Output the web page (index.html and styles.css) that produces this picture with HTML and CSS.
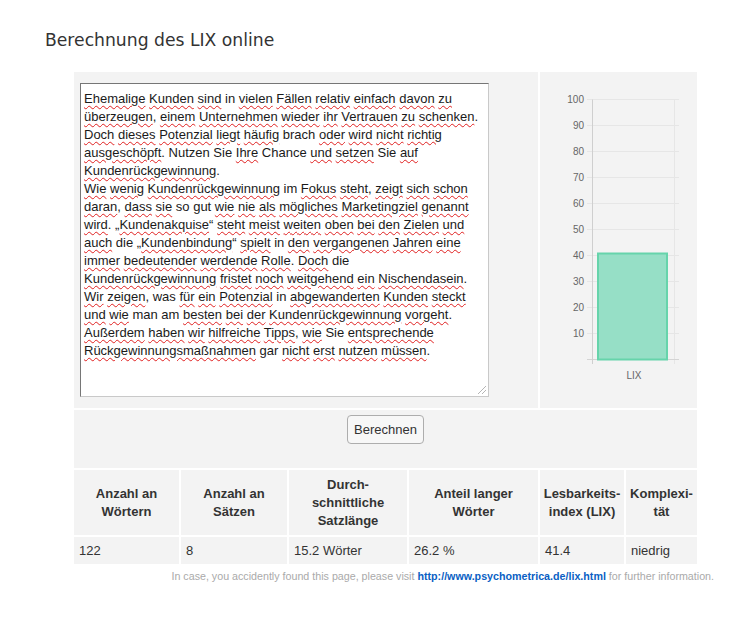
FILE: index.html
```html
<!DOCTYPE html>
<html lang="de">
<head>
    <meta charset="UTF-8">
    <meta name="viewport" content="width=device-width, initial-scale=1.0">
    <title>Berechnung des LIX online</title>
    <link rel="stylesheet" href="styles.css">
</head>
<body>

    <h2 class="title">Berechnung des LIX online</h2>

    <div class="lix">
        <div class="cell input-cell">
            <div class="textbox" id="text">Ehemalige Kunden sind in vielen Fällen relativ einfach davon zu<br>überzeugen, einem Unternehmen wieder ihr Vertrauen zu schenken.<br>Doch dieses Potenzial liegt häufig brach oder wird nicht richtig<br>ausgeschöpft. Nutzen Sie Ihre Chance und setzen Sie auf<br>Kundenrückgewinnung.<br>Wie wenig Kundenrückgewinnung im Fokus steht, zeigt sich schon<br>daran, dass sie so gut wie nie als mögliches Marketingziel genannt<br>wird. „Kundenakquise“ steht meist weiten oben bei den Zielen und<br>auch die „Kundenbindung“ spielt in den vergangenen Jahren eine<br>immer bedeutender werdende Rolle. Doch die<br>Kundenrückgewinnung fristet noch weitgehend ein Nischendasein.<br>Wir zeigen, was für ein Potenzial in abgewanderten Kunden steckt<br>und wie man am besten bei der Kundenrückgewinnung vorgeht.<br>Außerdem haben wir hilfreiche Tipps, wie Sie entsprechende<br>Rückgewinnungsmaßnahmen gar nicht erst nutzen müssen.</div>
        </div>
        <div class="cell chart-cell">
            <svg class="chart" width="157" height="335" viewBox="0 0 157 335">
                <g class="grid">
                    <line x1="47" y1="27.5" x2="139" y2="27.5"/>
                    <line x1="47" y1="53.5" x2="139" y2="53.5"/>
                    <line x1="47" y1="79.5" x2="139" y2="79.5"/>
                    <line x1="47" y1="105.5" x2="139" y2="105.5"/>
                    <line x1="47" y1="131.5" x2="139" y2="131.5"/>
                    <line x1="47" y1="157.5" x2="139" y2="157.5"/>
                    <line x1="47" y1="183.5" x2="139" y2="183.5"/>
                    <line x1="47" y1="209.5" x2="139" y2="209.5"/>
                    <line x1="47" y1="235.5" x2="139" y2="235.5"/>
                    <line x1="47" y1="261.5" x2="139" y2="261.5"/>
                    <line x1="134.5" y1="27.5" x2="134.5" y2="292"/>
                </g>
                <line class="zero" x1="47" y1="287.5" x2="139" y2="287.5"/>
                <line class="axis" x1="52.5" y1="27.5" x2="52.5" y2="292"/>
                <g class="ticks">
                    <text x="44" y="31">100</text>
                    <text x="44" y="57">90</text>
                    <text x="44" y="83">80</text>
                    <text x="44" y="109">70</text>
                    <text x="44" y="135">60</text>
                    <text x="44" y="161">50</text>
                    <text x="44" y="187">40</text>
                    <text x="44" y="213">30</text>
                    <text x="44" y="239">20</text>
                    <text x="44" y="265">10</text>
                </g>
                <rect class="bar" x="58" y="181.5" width="69" height="106"/>
                <text class="label" x="94" y="307">LIX</text>
            </svg>
        </div>
        <div class="cell button-cell">
            <button class="calc">Berechnen</button>
        </div>
        <div class="cell head">Anzahl an<br>Wörtern</div>
        <div class="cell head">Anzahl an<br>Sätzen</div>
        <div class="cell head">Durch-<br>schnittliche<br>Satzlänge</div>
        <div class="cell head">Anteil langer<br>Wörter</div>
        <div class="cell head">Lesbarkeits-<br>index (LIX)</div>
        <div class="cell head">Komplexi-<br>tät</div>
        <div class="cell value">122</div>
        <div class="cell value">8</div>
        <div class="cell value">15.2 Wörter</div>
        <div class="cell value">26.2 %</div>
        <div class="cell value">41.4</div>
        <div class="cell value">niedrig</div>
    </div>

    <p class="note">In case, you accidently found this page, please visit <a href="#">http://www.psychometrica.de/lix.html</a> for further information.</p>

    <script>
        // words the spell checker does not flag
        const known = ["in", "so", "gut", "die", "Sie", "brach", "Nutzen", "Chance", "im", "was", "man", "am", "gar"];

        function markWords(box) {
            box.childNodes.forEach(function (node) {
                if (node.nodeType !== 3) return;
                let html = node.textContent.replace(/[A-Za-zÄÖÜäöüß]+/g, function (word) {
                    return known.indexOf(word) >= 0 ? word : '<span class="typo">' + word + '</span>';
                });
                let span = document.createElement("span");
                span.innerHTML = html;
                box.replaceChild(span, node);
            });
        }

        markWords(document.getElementById("text"));
    </script>

</body>
</html>
```

FILE: styles.css
```css
body {
    margin: 0;
    font-family: "Liberation Sans", Arial, sans-serif;
    font-size: 13px;
    color: #333;
    background: white;
}
.title {
    font-family: "DejaVu Sans", Verdana, sans-serif;
    font-size: 17.2px;
    font-weight: normal;
    line-height: 20px;
    color: #333;
    margin: 30px 0 0 45px;
}
.lix {
    display: grid;
    grid-template-columns: 105px 106px 118px 129px 84px 71px;
    grid-template-rows: 336px 58px 65px 27px;
    gap: 2px;
    width: 623px;
    margin: 22px 0 0 74px;
}
.cell {
    background: #f3f3f3;
}
.input-cell {
    grid-column: span 4;
    padding: 11px 0 0 6px;
}
.chart-cell {
    grid-column: span 2;
}
.button-cell {
    grid-column: span 6;
    text-align: center;
    padding-top: 5px;
}
.textbox {
    position: relative;
    box-sizing: border-box;
    width: 409px;
    height: 314px;
    background: white;
    border: 1px solid;
    border-color: #767676 #c9c9c9 #c9c9c9 #767676;
    padding: 6px 3px;
    line-height: 18px;
    color: #1a1a1a;
    white-space: nowrap;
    overflow: hidden;
}
.textbox::after {
    content: "";
    position: absolute;
    right: 2px;
    bottom: 2px;
    width: 8px;
    height: 8px;
    background:
        linear-gradient(135deg, transparent 45%, #b5b5b5 45%, #b5b5b5 55%, transparent 55%, transparent 70%, #b5b5b5 70%, #b5b5b5 80%, transparent 80%);
}
.typo {
    text-decoration: underline wavy #e02020;
    text-decoration-thickness: 1px;
    text-underline-offset: 2px;
}
.chart {
    display: block;
}
.grid line {
    stroke: #e6e6e6;
    stroke-width: 1;
}
.zero {
    stroke: #d4d4d4;
}
.axis {
    stroke: #cfcfcf;
}
.ticks text, .label {
    font-family: "Liberation Sans", Arial, sans-serif;
    font-size: 10px;
    fill: #666;
}
.ticks text {
    text-anchor: end;
}
.label {
    text-anchor: middle;
}
.bar {
    fill: #96dfc6;
    stroke: #66d4ab;
    stroke-width: 2;
}
.calc {
    font-family: "Liberation Sans", Arial, sans-serif;
    font-size: 13px;
    color: #333;
    background: #f7f7f7;
    border: 1px solid #adadad;
    border-radius: 4px;
    width: 77px;
    height: 29px;
    padding: 0;
}
.head {
    display: flex;
    align-items: center;
    justify-content: center;
    text-align: center;
    font-weight: bold;
    line-height: 18px;
}
.value {
    display: flex;
    align-items: center;
    padding-left: 5px;
}
.note {
    width: 714px;
    text-align: right;
    font-size: 10.7px;
    color: #aaa;
    margin: 6px 0 0 0;
}
.note a {
    color: #0a5fc4;
    font-weight: bold;
    text-decoration: none;
}
```
